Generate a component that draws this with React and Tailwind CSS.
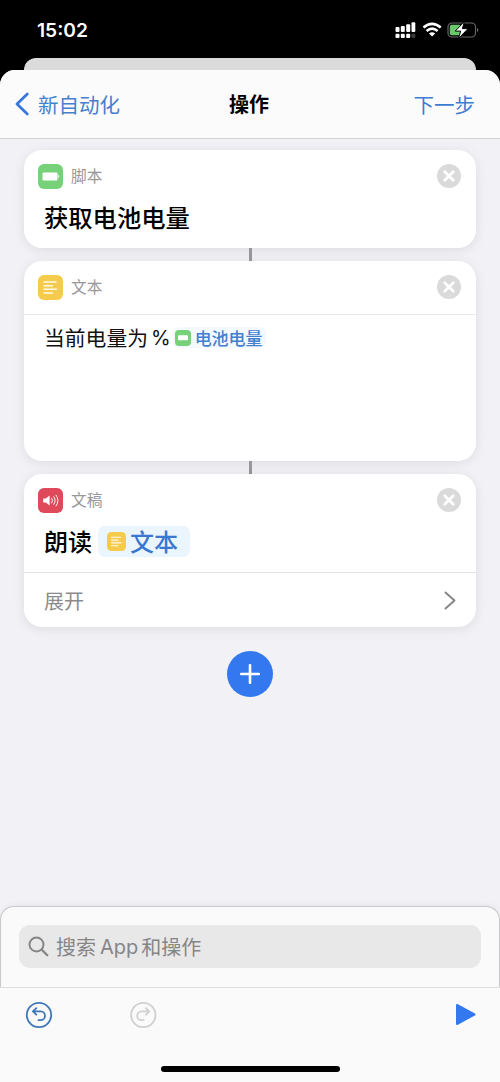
import React from "react";

function BatteryGlyph({ className }) {
  return (
    <svg className={className} viewBox="0 0 25 25">
      <rect width="25" height="25" rx="6" fill="#76d178" />
      <rect x="4.500" y="8.500" width="15" height="8" rx="1" fill="#fff" />
      <path d="M20.300 10.800c1.300.3 1.300 3.100 0 3.400z" fill="#fff" />
    </svg>
  );
}

function SmallBatteryGlyph({ className }) {
  return (
    <svg className={className} viewBox="0 0 16 16">
      <rect width="16" height="16" rx="4" fill="#76d178" />
      <rect x="3" y="5.200" width="10" height="5" rx="1" fill="#fff" />
    </svg>
  );
}

function TextGlyph({ className }) {
  return (
    <svg className={className} viewBox="0 0 25 25">
      <rect width="25" height="25" rx="6" fill="#f5cb4b" />
      <path d="M6 7h12M6 10.700h8.500M6 14.300h12.500M6 18h8.500" stroke="#fff" strokeWidth="1.400" strokeLinecap="round" opacity=".9" />
    </svg>
  );
}

function SpeakerGlyph({ className }) {
  return (
    <svg className={className} viewBox="0 0 25 25">
      <rect width="25" height="25" rx="6" fill="#df495a" />
      <path d="M5.200 10.400h2.600l3.800-3v10.200l-3.800-3H5.200z" fill="#fff" />
      <path d="M13.600 10.200c1 1.400 1 3.400 0 4.800M15.800 8.700c1.700 2.300 1.700 5.400 0 7.700M18 7.200c2.500 3.200 2.500 7.500 0 10.700" fill="none" stroke="#fff" strokeWidth="1" strokeLinecap="round" />
    </svg>
  );
}

function CloseGlyph() {
  return (
    <svg className="mb-px ml-auto size-6" viewBox="0 0 24 24">
      <circle cx="12" cy="12" r="12" fill="#dadada" />
      <path d="M7.700 7.700l8.600 8.600M16.300 7.700l-8.600 8.600" stroke="#fff" strokeWidth="2.700" strokeLinecap="round" />
    </svg>
  );
}

function CardHeader({ icon, label }) {
  return (
    <div className="flex h-[53px] items-center pl-[14px] pr-[15px]">
      {icon}
      <span className="mb-px ml-2 text-[15.700px] leading-6 text-[#98989b]">{label}</span>
      <CloseGlyph />
    </div>
  );
}

function Card({ className, children }) {
  return (
    <section className={"w-[452px] shrink-0 rounded-[18px] bg-white shadow-[0_2px_12px_rgba(0,0,0,0.09)] " + className}>
      {children}
    </section>
  );
}

function Connector() {
  return <div className="h-[13px] w-[3px] shrink-0 bg-[#98989c]" />;
}

function StatusBar() {
  return (
    <div className="flex h-[58px] items-start pl-[37px] pr-[20px]">
      <span className="mt-[18px] font-[Inter] text-[19.200px] font-semibold leading-6 text-white">15:02</span>
      <svg className="ml-auto mt-[20px] h-5 w-[86px]" viewBox="0 0 86 20">
        <g fill="#fff">
          <rect x="1.500" y="7" width="4" height="5" rx="1" />
          <rect x="6.800" y="6" width="4" height="6" rx="1" />
          <rect x="12.200" y="4.300" width="4" height="7.700" rx="1" />
          <rect x="17.500" y="2.300" width="3.800" height="9.700" rx="1" />
          <rect x="1.500" y="13.700" width="4" height="4.300" rx="1" />
          <rect x="6.800" y="13.700" width="4" height="4.300" rx="1" />
          <rect x="12.200" y="13.700" width="4" height="4.300" rx="1" />
        </g>
        <rect x="17.500" y="13.700" width="3.800" height="4.300" rx="1" fill="#3a3a3a" />
        <path d="M29.500 7.500q8.600-7.400 17.200 0M32.600 11q5.500-4.600 11 0" stroke="#fff" strokeWidth="2.600" fill="none" />
        <path d="M35 13.400q3.100-2.300 6.200 0l-3.100 3.100z" fill="#fff" />
        <rect x="54" y="3" width="27.500" height="14" rx="4" fill="none" stroke="#666" strokeWidth="1.200" />
        <rect x="55.800" y="4.800" width="11.500" height="10.400" rx="2" fill="#69c96a" />
        <path d="M83 8c1.800.5 1.800 3.500 0 4z" fill="#666" />
        <path d="M70.500 1.500l-9.300 9.600h5.500l-2.200 7.500 9.600-10h-5.700z" fill="#fff" stroke="#000" strokeWidth="1" />
      </svg>
    </div>
  );
}

export default function App() {
  return (
    <div className="flex h-[1082px] w-[500px] flex-col overflow-hidden bg-black font-['Noto_Sans_CJK_SC',sans-serif]">
      <StatusBar />
      <div className="mx-6 h-3 shrink-0 rounded-t-[12px] bg-[#dbdbdb]" />
      <div className="flex min-h-0 flex-1 flex-col overflow-hidden rounded-t-[15px] bg-[#f1f1f6]">
        <header className="grid h-[69px] shrink-0 grid-cols-3 items-center border-b border-[#d2d2d4] bg-[#fbfbfb] pl-[15px] pr-[25px] text-[20.500px] leading-7">
          <div className="flex items-center text-[#4680cc]">
            <svg className="h-6 w-[15px]" viewBox="0 0 15 24">
              <path d="M12.300 2L2 12l10.300 10" fill="none" stroke="#3b78dc" strokeWidth="2.800" strokeLinecap="round" strokeLinejoin="round" />
            </svg>
            <span className="mb-px ml-2 whitespace-nowrap">新自动化</span>
          </div>
          <h1 className="pl-[8px] text-center text-[20px] font-bold">操作</h1>
          <span className="mb-px text-right text-[#3d7cd2]">下一步</span>
        </header>

        <main className="flex min-h-0 flex-1 flex-col items-center pt-[11px]">
          <Card className="h-[98px]">
            <CardHeader icon={<BatteryGlyph className="size-[25px]" />} label="脚本" />
            <p className="-mt-px pl-5 text-[24.300px] font-medium leading-[30px] text-black">获取电池电量</p>
          </Card>
          <Connector />
          <Card className="h-[200px]">
            <CardHeader icon={<TextGlyph className="size-[25px]" />} label="文本" />
            <div className="flex h-[46px] items-center border-t border-[#e9e9e9] pl-5 text-[20.800px] leading-7 text-[#111]">
              <span className="mb-[2px]">当前电量为</span>
              <span className="ml-[3px] font-[Inter] text-[20px]">%</span>
              <span className="ml-[2px] flex h-[21px] items-center rounded-md bg-[#f3f9fe] pl-[2px] pr-[3px] text-[17px] font-medium leading-5 text-[#447fd0]">
                <SmallBatteryGlyph className="mr-1 size-4" />
                <span>电池电量</span>
              </span>
            </div>
          </Card>
          <Connector />
          <Card className="h-[153px]">
            <CardHeader icon={<SpeakerGlyph className="size-[25px]" />} label="文稿" />
            <div className="flex h-[45px] items-start pl-5 text-[24px] font-medium leading-[30px]">
              <span className="-mt-px">朗读</span>
              <span className="-mt-px ml-[6px] flex h-[31px] items-center rounded-[7px] bg-[#ebf5fd] pl-[9px] pr-3 text-[#3a78cf]">
                <TextGlyph className="mr-[4px] size-[19px]" />
                <span className="mb-[2px]">文本</span>
              </span>
            </div>
            <div className="flex h-[55px] items-center justify-between border-t border-[#e4e4e4] pl-5 pr-5 text-[20px] text-[#8b8b8d]">
              <span className="pt-px">展开</span>
              <svg className="h-[19px] w-[12px]" viewBox="0 0 12 19">
                <path d="M1.500 1.500l9 8-9 8" fill="none" stroke="#858587" strokeWidth="1.900" strokeLinecap="round" strokeLinejoin="round" />
              </svg>
            </div>
          </Card>
          <button className="mt-6 flex size-[46px] shrink-0 items-center justify-center rounded-full bg-[#3478f0]">
            <svg className="size-5" viewBox="0 0 20 20">
              <path d="M10 1.200v17.600M1.200 10h17.600" stroke="#fff" strokeWidth="2.600" strokeLinecap="round" />
            </svg>
          </button>
        </main>

        <div className="h-[81px] shrink-0 rounded-t-[14px] border-x border-t border-[#c9c9cc] bg-[#fafafa] px-[18px] pt-[18px] shadow-[0_-1px_6px_rgba(0,0,0,0.05)]">
          <div className="flex h-[43px] items-center rounded-[11px] bg-[#e8e8e8] pl-[9px] text-[20px] text-[#858587]">
            <svg className="mr-[7px] h-[21px] w-[21px]" viewBox="0 0 21 21">
              <circle cx="8.500" cy="8.500" r="7" fill="none" stroke="#858587" strokeWidth="1.900" />
              <path d="M13.700 13.700l5.600 5.600" stroke="#858587" strokeWidth="2.300" strokeLinecap="round" />
            </svg>
            <span>搜索</span>
            <span className="ml-[4px] mr-[3px] font-[Inter]">App</span>
            <span>和操作</span>
          </div>
        </div>
        <footer className="flex h-[95px] shrink-0 flex-col items-center border-t border-[#dedee0] bg-[#fafafa]">
          <div className="flex h-[53px] w-full items-center pl-[25px] pr-[24px]">
            <svg className="size-7" viewBox="0 0 28 28" fill="none" stroke="#3f78b8" strokeWidth="1.800" strokeLinecap="round" strokeLinejoin="round">
              <circle cx="14" cy="14" r="12.200" />
              <path d="M11.300 7.200L7.900 10.400l3.400 3.200M8.100 10.400h7.500a4.400 4.400 0 0 1 0 8.800h-2.100" />
            </svg>
            <svg className="ml-[76px] size-7" viewBox="0 0 28 28" fill="none" stroke="#d0d0d1" strokeWidth="1.800" strokeLinecap="round" strokeLinejoin="round">
              <circle cx="14.300" cy="14" r="12.200" />
              <path d="M16.900 7.200l3.400 3.200-3.400 3.200M20.100 10.400h-7.500a4.400 4.400 0 0 0 0 8.800h2.100" />
            </svg>
            <svg className="ml-auto h-[23px] w-[21px]" viewBox="0 0 21 23">
              <path d="M2 2v19l17.500-9.500z" fill="#3478f0" stroke="#3478f0" strokeWidth="2" strokeLinejoin="round" />
            </svg>
          </div>
          <div className="mt-[25px] h-[6px] w-[179px] shrink-0 rounded-full bg-black" />
        </footer>
      </div>
    </div>
  );
}
